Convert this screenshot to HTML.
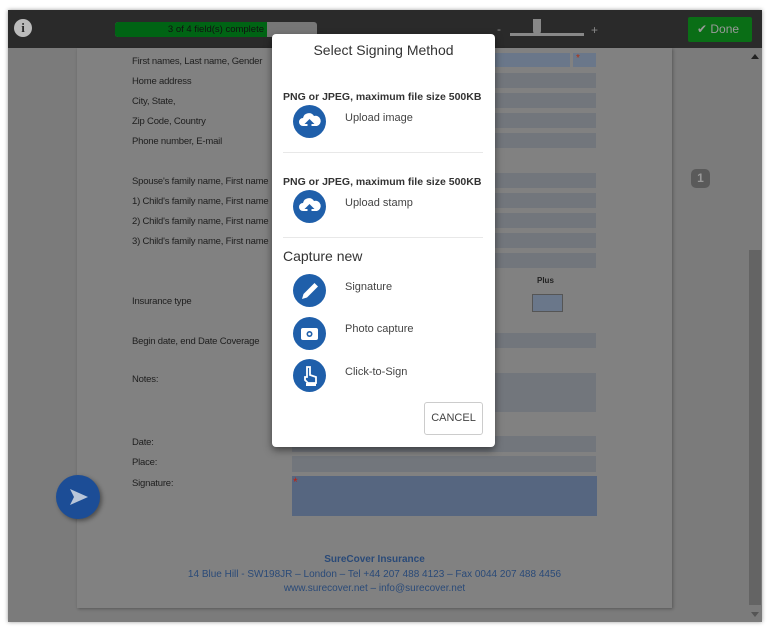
<!DOCTYPE html>
<html><head><style>
*{margin:0;padding:0;box-sizing:border-box}
body{width:770px;height:629px;background:#fff;position:relative;overflow:hidden;font-family:"Liberation Sans",sans-serif}
.abs{position:absolute}
#frame{left:8px;top:10px;width:754px;height:612px;background:#7b7b7b;overflow:hidden;box-shadow:0 0 4px rgba(0,0,0,.4)}
#bar{left:0;top:0;width:754px;height:38px;background:#2a2a2a}
#page{left:69px;top:38px;width:595px;height:560px;background:#818181;box-shadow:1px 1px 3px rgba(0,0,0,.3)}
#in{position:absolute;left:0;top:-10px;width:595px;height:570px}
.lbl{position:absolute;font-size:9.5px;color:#1e1e1e;left:55px;letter-spacing:-0.2px}
.f{position:absolute;background:#72767c}
.h{background:#6a778a}
.ic{position:absolute;left:21px;width:33px;height:33px;border-radius:50%;background:#1f5faa}
.it{position:absolute;left:73px;font-size:11px;color:#444}
.bold{position:absolute;left:11px;font-size:10.5px;font-weight:bold;color:#333}
.hr{position:absolute;left:11px;width:200px;height:1px;background:#e8e8e8}
.ft{position:absolute;width:595px;text-align:center;color:#2a4a78;font-size:10px}
</style></head><body>
<div id="frame" class="abs">
<div id="bar" class="abs">
 <div class="abs" style="left:6px;top:9px;width:18px;height:18px;border-radius:50%;background:#bbb;color:#2a2a2a;font:bold 13px 'Liberation Serif',serif;text-align:center;line-height:18px">i</div>
 <div class="abs" style="left:107px;top:12px;width:202px;height:15px;border-radius:3px;background:#777;overflow:hidden"><div style="width:152px;height:15px;background:#006414;color:#111;font-size:9.5px;text-align:right;padding-right:3px;line-height:15px">3 of 4 field(s) complete</div></div>
 <div class="abs" style="left:489px;top:12px;color:#888;font-size:12px">-</div>
 <div class="abs" style="left:502px;top:23px;width:74px;height:3px;background:#888"></div>
 <div class="abs" style="left:525px;top:9px;width:8px;height:16px;border-radius:0 0 4px 4px;background:#888"></div>
 <div class="abs" style="left:583px;top:13px;color:#888;font-size:12px">+</div>
 <div class="abs" style="left:680px;top:7px;width:64px;height:25px;border-radius:2px;background:#0a6e16;color:#9a9a9a;font-size:12px;line-height:25px;padding-left:9px">✔ Done</div>
</div>
<div id="page" class="abs"><div id="in">
 <div class="lbl" style="top:18px">First names, Last name, Gender</div>
 <div class="lbl" style="top:38px">Home address</div>
 <div class="lbl" style="top:58px">City, State,</div>
 <div class="lbl" style="top:78px">Zip Code, Country</div>
 <div class="lbl" style="top:98px">Phone number, E-mail</div>
 <div class="lbl" style="top:138px">Spouse's family name, First name</div>
 <div class="lbl" style="top:158px">1) Child's family name, First name</div>
 <div class="lbl" style="top:178px">2) Child's family name, First name</div>
 <div class="lbl" style="top:198px">3) Child's family name, First name</div>
 <div class="lbl" style="top:258px">Insurance type</div>
 <div class="lbl" style="top:298px">Begin date, end Date Coverage</div>
 <div class="lbl" style="top:336px">Notes:</div>
 <div class="lbl" style="top:399px">Date:</div>
 <div class="lbl" style="top:419px">Place:</div>
 <div class="lbl" style="top:440px">Signature:</div>
 <div class="f h" style="left:215px;top:15px;width:278px;height:14px"></div>
 <div class="f h" style="left:496px;top:15px;width:23px;height:14px"><div style="color:#b03010;font-size:10px;margin-left:3px">*</div></div>
 <div class="f" style="left:215px;top:35px;width:304px;height:15px"></div>
 <div class="f" style="left:215px;top:55px;width:304px;height:15px"></div>
 <div class="f" style="left:215px;top:75px;width:304px;height:15px"></div>
 <div class="f" style="left:215px;top:95px;width:304px;height:15px"></div>
 <div class="f" style="left:215px;top:135px;width:304px;height:15px"></div>
 <div class="f" style="left:215px;top:155px;width:304px;height:15px"></div>
 <div class="f" style="left:215px;top:175px;width:304px;height:15px"></div>
 <div class="f" style="left:215px;top:195px;width:304px;height:15px"></div>
 <div class="f" style="left:215px;top:215px;width:304px;height:15px"></div>
 <div class="abs" style="left:460px;top:238px;font-size:8px;font-weight:bold;color:#222">Plus</div>
 <div class="f h" style="left:455px;top:256px;width:31px;height:18px;border:1px solid #555"></div>
 <div class="f" style="left:215px;top:295px;width:304px;height:15px"></div>
 <div class="f" style="left:215px;top:335px;width:304px;height:39px"></div>
 <div class="f" style="left:215px;top:398px;width:304px;height:16px"></div>
 <div class="f" style="left:215px;top:418px;width:304px;height:16px"></div>
 <div class="f" style="left:215px;top:438px;width:305px;height:40px;background:#566680"><div style="color:#c02010;font-size:12px;margin-left:1px;line-height:12px">*</div></div>
 <div class="ft" style="top:516px;font-weight:bold">SureCover Insurance</div>
 <div class="ft" style="top:531px">14 Blue Hill - SW198JR – London – Tel +44 207 488 4123 – Fax 0044 207 488 4456</div>
 <div class="ft" style="top:545px">www.surecover.net – info@surecover.net</div>
</div></div>
<div class="abs" style="left:683px;top:159px;width:19px;height:19px;border-radius:5px;background:#5a5a5a;color:#999;font-weight:bold;font-size:12px;text-align:center;line-height:19px">1</div>
<div class="abs" style="left:740px;top:38px;width:14px;height:574px;background:#7b7b7b"></div>
<div class="abs" style="left:741px;top:240px;width:12px;height:355px;background:#646464"></div>
<div class="abs" style="left:743px;top:44px;width:0;height:0;border:4px solid transparent;border-bottom:5px solid #222;border-top:0"></div>
<div class="abs" style="left:743px;top:602px;width:0;height:0;border:4px solid transparent;border-top:5px solid #555;border-bottom:0"></div>
<div class="abs" style="left:48px;top:465px;width:44px;height:44px;border-radius:50%;background:#1c4d96;box-shadow:2px 2px 4px rgba(0,0,0,.4)"><svg width="44" height="44"><path d="M14 14 L32 22 L14 30 L18 22Z" fill="#b9c6d9"/></svg></div>
</div>
<div class="abs" style="left:272px;top:34px;width:223px;height:413px;background:#fff;border-radius:4px;box-shadow:0 3px 8px rgba(0,0,0,.5)">
 <div class="abs" style="left:0;top:8px;width:223px;text-align:center;font-size:14px;color:#333">Select Signing Method</div>
 <div class="bold" style="top:57px">PNG or JPEG, maximum file size 500KB</div>
 <div class="ic" style="top:71px"><svg width="33" height="33"><path d="M10 21a4 4 0 0 1 0-8a6 6 0 0 1 11-2a5 5 0 0 1 3 10z" fill="#fff"/><path d="M16.5 14l-5 5h3v6h4v-6h3z" fill="#1f5faa"/></svg></div>
 <div class="it" style="top:78px">Upload image</div>
 <div class="hr" style="top:118px"></div>
 <div class="bold" style="top:142px">PNG or JPEG, maximum file size 500KB</div>
 <div class="ic" style="top:156px"><svg width="33" height="33"><path d="M10 21a4 4 0 0 1 0-8a6 6 0 0 1 11-2a5 5 0 0 1 3 10z" fill="#fff"/><path d="M16.5 14l-5 5h3v6h4v-6h3z" fill="#1f5faa"/></svg></div>
 <div class="it" style="top:163px">Upload stamp</div>
 <div class="hr" style="top:203px"></div>
 <div class="abs" style="left:11px;top:214px;font-size:14px;color:#333">Capture new</div>
 <div class="ic" style="top:240px"><svg width="33" height="33"><path d="M9 25l1.5-5 11-11 3.5 3.5-11 11z" fill="#fff"/></svg></div>
 <div class="it" style="top:247px">Signature</div>
 <div class="ic" style="top:283px"><svg width="33" height="33"><rect x="8" y="11" width="17" height="12" rx="2" fill="#fff"/><circle cx="16.5" cy="17" r="3" fill="#1f5faa"/><circle cx="16.5" cy="17" r="1.4" fill="#fff"/></svg></div>
 <div class="it" style="top:289px">Photo capture</div>
 <div class="ic" style="top:325px"><svg width="33" height="33"><path d="M14 8v10h-2v3l3 3h8v-6l-6-2v-8z" fill="none" stroke="#fff" stroke-width="1.8"/><rect x="13" y="24" width="10" height="3" fill="#fff"/></svg></div>
 <div class="it" style="top:332px">Click-to-Sign</div>
 <div class="abs" style="left:152px;top:368px;width:59px;height:33px;border:1px solid #ccc;border-radius:3px;font-size:11px;color:#444;text-align:center;line-height:31px">CANCEL</div>
</div>
</body></html>
